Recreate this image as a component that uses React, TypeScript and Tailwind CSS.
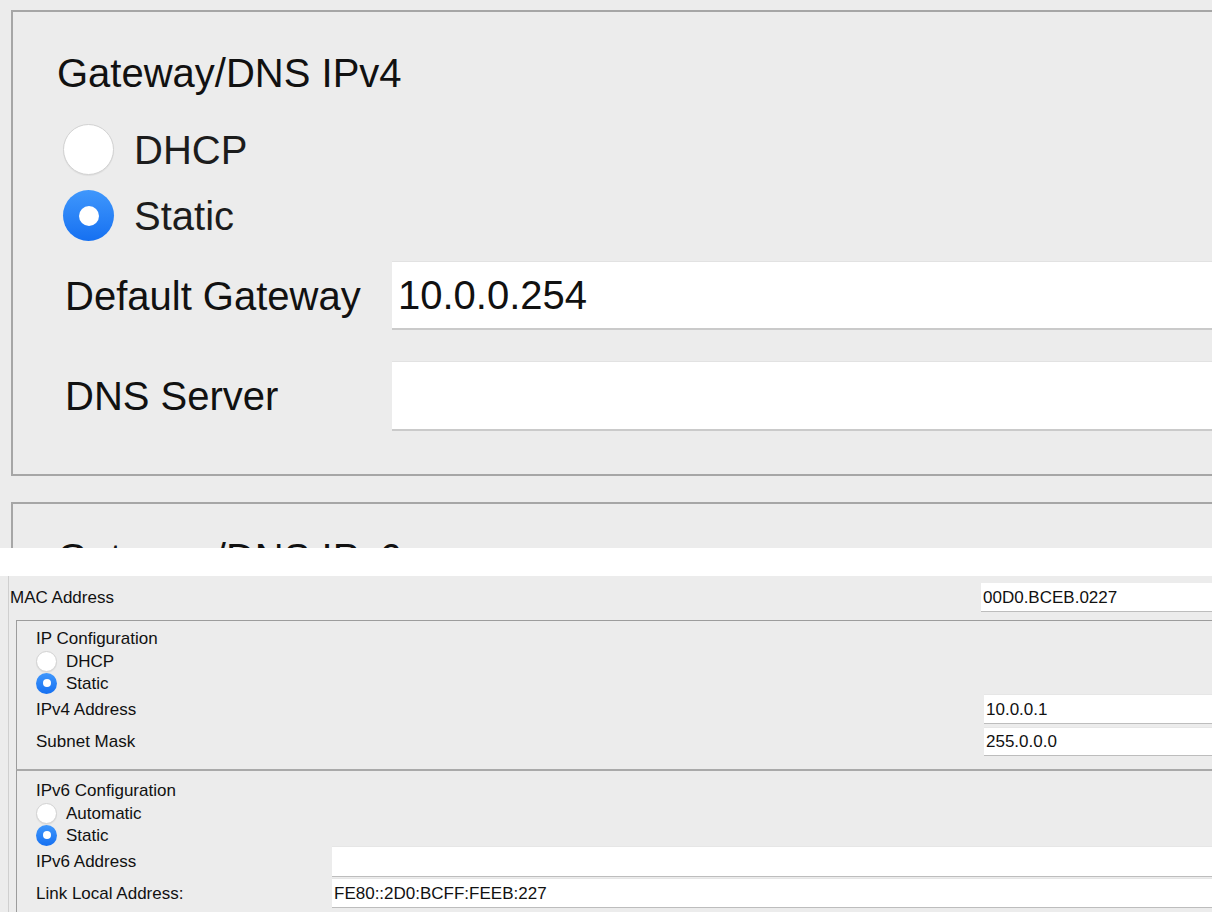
import clsx from "clsx";

const Radio = ({ on, big }: { on?: boolean; big?: boolean }) => (
  <span
    className={clsx(
      "flex shrink-0 items-center justify-center rounded-full",
      big ? "h-[51px] w-[51px]" : "h-[21px] w-[21px]",
      on
        ? "bg-linear-to-b from-[#3f97fc] to-[#1570f1]"
        : "border border-[#d2d2d2] bg-white shadow-[0_1px_1px_rgba(0,0,0,0.06)]"
    )}
  >
    {on && (
      <span
        className={clsx(
          "rounded-full bg-white",
          big ? "h-[20px] w-[20px]" : "h-[8px] w-[8px]"
        )}
      />
    )}
  </span>
);

const BigRadio = ({ label, on, className }: { label: string; on?: boolean; className?: string }) => (
  <div className={clsx("flex h-[51px] items-center gap-[20px] pl-[50px]", className)}>
    <Radio big on={on} />
    <span className="text-[40px] leading-none text-[#1c1c1c]">{label}</span>
  </div>
);

const BigField = ({ label, value, className }: { label: string; value?: string; className?: string }) => (
  <div className={clsx("flex items-center", className)}>
    <div className="w-[379px] shrink-0 pl-[52px] text-[40px] leading-none text-[#111]">{label}</div>
    <div className="flex h-full flex-1 items-center border-t border-b-2 border-t-[#e2e2e2] border-b-[#cacaca] bg-white pl-[6px] text-[40px] leading-none text-[#111]">
      {value}
    </div>
  </div>
);

const SmallRadio = ({ label, on }: { label: string; on?: boolean }) => (
  <div className="flex h-[22px] items-center gap-[9px]">
    <Radio on={on} />
    <span className="text-[17px] leading-none">{label}</span>
  </div>
);

const SmallField = ({
  label,
  value,
  labelW,
  className,
}: {
  label: string;
  value?: string;
  labelW: string;
  className?: string;
}) => (
  <div className={clsx("flex items-center", className)}>
    <div className={clsx("shrink-0 text-[17px] leading-none", labelW)}>{label}</div>
    <div className="flex h-full flex-1 items-center border-t border-b border-t-[#e6e6e6] border-b-[#bdbdbd] bg-white pl-[2px] text-[17px] leading-none">
      {value}
    </div>
  </div>
);

export default function App() {
  return (
    <div className="h-[912px] w-[1226px] overflow-hidden bg-white font-['Liberation_Sans',Arial,sans-serif] text-[#111]">
      {/* zoomed gateway panel */}
      <section className="h-[548px] w-[1212px] overflow-hidden bg-[#ececec] pt-[10px]">
        <div className="ml-[11px] h-[466px] border-t-2 border-b-2 border-l-2 border-[#a6a6a6]">
          <div className="mt-[38px] h-[46px] pl-[44px] text-[40px] leading-[46px] text-[#111]">
            Gateway/DNS IPv4
          </div>
          <BigRadio label="DHCP" className="mt-[28px]" />
          <BigRadio label="Static" on className="mt-[15px]" />
          <BigField label="Default Gateway" value="10.0.0.254" className="mt-[20px] h-[69px]" />
          <BigField label="DNS Server" className="mt-[31px] h-[70px]" />
        </div>
        <div className="mt-[26px] ml-[11px] h-[100px] border-t-2 border-l-2 border-[#a6a6a6]">
          <div className="mt-[31px] h-[46px] pl-[44px] text-[40px] leading-[46px] text-[#111]">
            Gateway/DNS IPv6
          </div>
        </div>
      </section>

      <div className="h-[28px]" />

      {/* config panel */}
      <section className="flex h-[336px] w-[1212px] overflow-hidden bg-[#ececec]">
        <div className="ml-[8px] w-px bg-[#cfcfcf]" />
        <div className="flex flex-1 flex-col">
          <div className="mt-[7px] flex h-[29px] items-center">
            <div className="w-[972px] shrink-0 pl-px text-[17px] leading-none">MAC Address</div>
            <div className="flex h-full flex-1 items-center border-b border-[#bdbdbd] bg-white pl-[2px] text-[17px] leading-none">
              00D0.BCEB.0227
            </div>
          </div>

          <div className="mt-[8px] ml-[7px] h-[149px] border-t border-l border-[#9c9c9c] pt-[7px] pl-[19px]">
            <div className="h-[22px] text-[17px] leading-[22px]">IP Configuration</div>
            <SmallRadio label="DHCP" />
            <SmallRadio label="Static" on />
            <SmallField label="IPv4 Address" value="10.0.0.1" labelW="w-[948px]" className="h-[30px]" />
            <SmallField label="Subnet Mask" value="255.0.0.0" labelW="w-[948px]" className="mt-[3px] h-[29px]" />
          </div>

          <div className="ml-[7px] flex-1 border-t-2 border-l border-t-[#a9a9a9] border-l-[#9c9c9c] pt-[9px] pl-[19px]">
            <div className="h-[22px] text-[17px] leading-[22px]">IPv6 Configuration</div>
            <SmallRadio label="Automatic" />
            <SmallRadio label="Static" on />
            <SmallField label="IPv6 Address" labelW="w-[296px]" className="h-[31px]" />
            <SmallField
              label="Link Local Address:"
              value="FE80::2D0:BCFF:FEEB:227"
              labelW="w-[296px]"
              className="mt-[1px] h-[30px]"
            />
          </div>
        </div>
      </section>
    </div>
  );
}
